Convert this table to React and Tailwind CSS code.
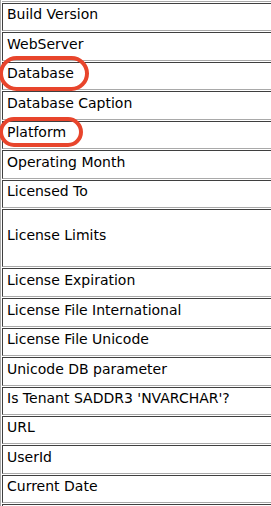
import React from "react";

const rows = [
  ["Build Version", 28],
  ["WebServer", 29],
  ["Database", 28],
  ["Database Caption", 29],
  ["Platform", 28],
  ["Operating Month", 29],
  ["Licensed To", 28],
  ["License Limits", 58],
  ["License Expiration", 29],
  ["License File International", 29],
  ["License File Unicode", 28],
  ["Unicode DB parameter", 29],
  ["Is Tenant SADDR3 'NVARCHAR'?", 28],
  ["URL", 28],
  ["UserId", 29],
  ["Current Date", 28],
  ["", 28],
];

export default function App() {
  return (
    <div className="relative w-[271px] h-[506px] overflow-hidden bg-white font-['DejaVu_Sans',Verdana,sans-serif] text-[14px] text-black">
      <div className="w-[640px] border-l border-l-[#a9a9a9] pl-[1px] flex flex-col gap-[1px]">
        <div className="h-[2px] border-b border-b-[#a9a9a9]" />
        {rows.map(([label, h], i) => (
          <div
            key={i}
            style={{ height: h }}
            className="flex items-center border-t border-l border-b border-t-[#3f3f3f] border-l-[#3f3f3f] border-b-[#a9a9a9] pl-[4px] pb-[5px] whitespace-nowrap"
          >
            {label}
          </div>
        ))}
      </div>
      <div className="absolute left-[-1px] top-[56px] w-[90px] h-[35px] rounded-full border-[4px] border-[#e8452c]" />
      <div className="absolute left-[-1px] top-[117px] w-[84px] h-[30px] rounded-full border-[4px] border-[#e8452c]" />
    </div>
  );
}
